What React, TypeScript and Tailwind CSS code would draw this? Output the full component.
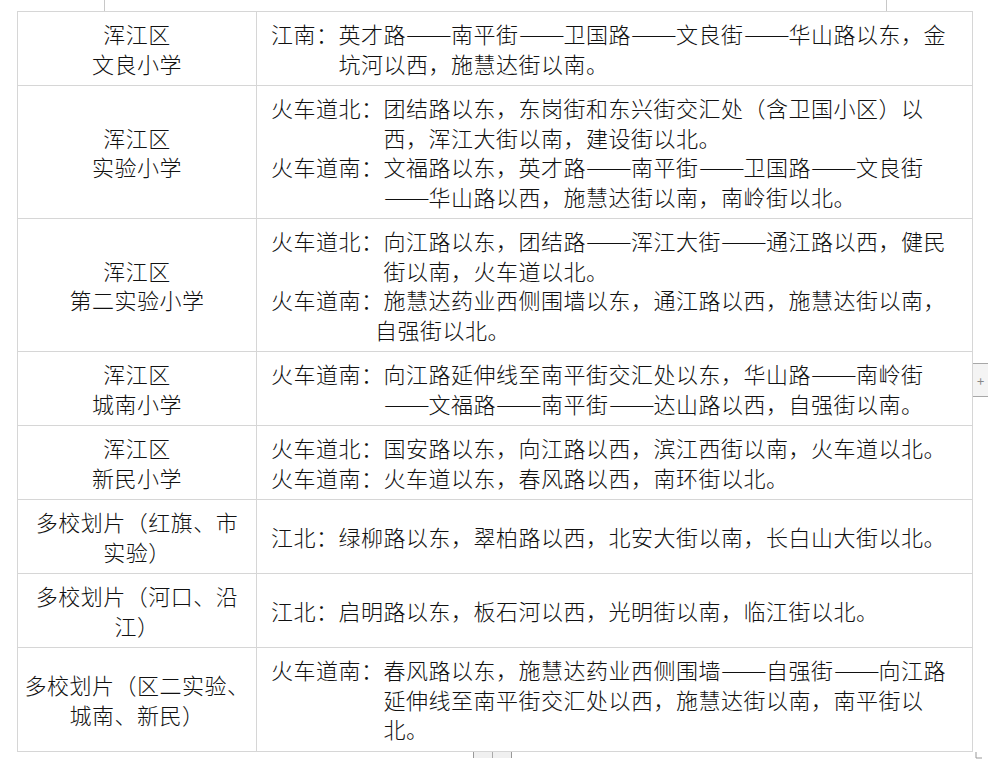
import React from "react";

type Line = { t: string; indent?: number };
type Row = { h: number; left: string[]; right: Line[] };

const C = 22.5;

const rows: Row[] = [
  {
    h: 74,
    left: ["浑江区", "文良小学"],
    right: [
      { t: "江南：英才路——南平街——卫国路——文良街——华山路以东，金" },
      { t: "坑河以西，施慧达街以南。", indent: 3 * C },
    ],
  },
  {
    h: 133,
    left: ["浑江区", "实验小学"],
    right: [
      { t: "火车道北：团结路以东，东岗街和东兴街交汇处（含卫国小区）以" },
      { t: "西，浑江大街以南，建设街以北。", indent: 5 * C },
      { t: "火车道南：文福路以东，英才路——南平街——卫国路——文良街" },
      { t: "——华山路以西，施慧达街以南，南岭街以北。", indent: 5 * C },
    ],
  },
  {
    h: 133,
    left: ["浑江区", "第二实验小学"],
    right: [
      { t: "火车道北：向江路以东，团结路——浑江大街——通江路以西，健民" },
      { t: "街以南，火车道以北。", indent: 5 * C },
      { t: "火车道南：施慧达药业西侧围墙以东，通江路以西，施慧达街以南，" },
      { t: "自强街以北。", indent: 104 },
    ],
  },
  {
    h: 74,
    left: ["浑江区", "城南小学"],
    right: [
      { t: "火车道南：向江路延伸线至南平街交汇处以东，华山路——南岭街" },
      { t: "——文福路——南平街——达山路以西，自强街以南。", indent: 5 * C },
    ],
  },
  {
    h: 74,
    left: ["浑江区", "新民小学"],
    right: [
      { t: "火车道北：国安路以东，向江路以西，滨江西街以南，火车道以北。" },
      { t: "火车道南：火车道以东，春风路以西，南环街以北。" },
    ],
  },
  {
    h: 74,
    left: ["多校划片（红旗、市", "实验）"],
    right: [{ t: "江北：绿柳路以东，翠柏路以西，北安大街以南，长白山大街以北。" }],
  },
  {
    h: 74,
    left: ["多校划片（河口、沿", "江）"],
    right: [{ t: "江北：启明路以东，板石河以西，光明街以南，临江街以北。" }],
  },
  {
    h: 104,
    left: ["多校划片（区二实验、", "城南、新民）"],
    right: [
      { t: "火车道南：春风路以东，施慧达药业西侧围墙——自强街——向江路" },
      { t: "延伸线至南平街交汇处以西，施慧达街以南，南平街以", indent: 5 * C },
      { t: "北。", indent: 5 * C },
    ],
  },
];

function Text({ t }: { t: string }) {
  const parts = t.split("——");
  return (
    <>
      {parts.map((p, i) => (
        <React.Fragment key={i}>
          {i > 0 && (
            <span className="inline-block w-[45px] align-top">
              <span className="inline-block origin-left scale-x-[1.25] tracking-[0px] whitespace-nowrap">
                ——
              </span>
            </span>
          )}
          {p}
        </React.Fragment>
      ))}
    </>
  );
}

export default function App() {
  return (
    <div
      className="relative w-[988px] h-[759px] overflow-hidden bg-white text-[#111]"
      style={{ fontFamily: '"Noto Sans CJK SC", "Noto Sans", sans-serif' }}
    >
      {/* crop marks */}
      <div className="absolute left-[104px] top-0 h-[11px] w-px bg-[#c8c8c8]" />
      <div className="absolute left-[886px] top-0 h-[11px] w-px bg-[#c8c8c8]" />

      <div className="ml-[17px] mt-[11px] w-[956px] border-t border-l border-r border-[#d6d6d6] text-[22px] tracking-[0.5px] leading-[29.5px] font-light">
        {rows.map((r, i) => (
          <div
            key={i}
            className="flex border-b border-[#d6d6d6]"
            style={{ height: r.h }}
          >
            <div className="w-[239px] shrink-0 border-r border-[#d6d6d6] flex flex-col items-center justify-center">
              {r.left.map((l, j) => (
                <div key={j} className="whitespace-nowrap text-center">
                  {l}
                </div>
              ))}
            </div>
            <div className="flex-1 flex flex-col justify-center pl-[14px]">
              {r.right.map((l, j) => (
                <div
                  key={j}
                  className="whitespace-nowrap"
                  style={{ marginLeft: l.indent ?? 0 }}
                >
                  <Text t={l.t} />
                </div>
              ))}
            </div>
          </div>
        ))}
      </div>

      {/* right side + tab */}
      <div className="absolute left-[973px] top-[363px] w-[15px] h-[34px] bg-[#f4f4f4] border-t border-b border-[#a8a8a8] flex items-center justify-center text-[13px] leading-none text-[#888]">
        +
      </div>

      {/* bottom small scroll marker */}
      <div className="absolute left-[473px] top-[752px] w-[39px] h-[6px] bg-[#f0f0f0] border-l border-r border-[#999] flex justify-center">
        <div className="w-px h-[6px] bg-[#aaa]" />
      </div>
      <svg
        className="absolute left-[975px] top-[752px]"
        width="8"
        height="7"
        viewBox="0 0 8 7"
      >
        <path d="M1 0v6h6" fill="none" stroke="#999" strokeWidth="1" />
      </svg>
    </div>
  );
}
